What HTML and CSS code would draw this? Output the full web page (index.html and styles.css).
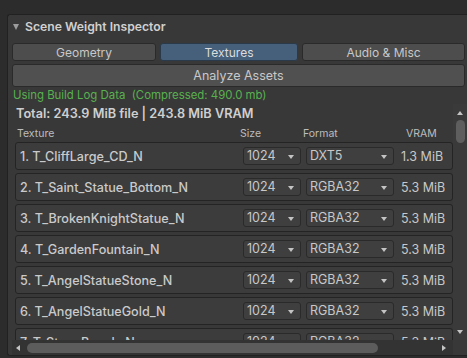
FILE: index.html
```html
<!DOCTYPE html>
<html lang="en">
<head>
  <meta charset="UTF-8">
  <title>Scene Weight Inspector</title>
  <link rel="stylesheet" href="styles.css">
</head>
<body>
  <div class="panel">
    <div class="foldout"><span class="fold-arrow"></span>Scene Weight Inspector</div>

    <div class="tabs">
      <button class="tab">Geometry</button>
      <button class="tab active">Textures</button>
      <button class="tab">Audio &amp; Misc</button>
    </div>

    <button class="analyze">Analyze Assets</button>

    <div class="build-log">Using Build Log Data&nbsp;&nbsp;(Compressed: 490.0 mb)</div>

    <div class="scroll-view">
      <div class="scroll-content">
        <div class="total">Total: 243.9 MiB file | 243.8 MiB VRAM</div>

        <div class="table-head">
          <span>Texture</span>
          <span>Size</span>
          <span>Format</span>
          <span>VRAM</span>
        </div>

        <div class="tex-row">
          <span class="tex-name">1. T_CliffLarge_CD_N</span>
          <div class="popup">1024</div>
          <div class="popup">DXT5</div>
          <span class="vram">1.3 MiB</span>
        </div>
        <div class="tex-row">
          <span class="tex-name">2. T_Saint_Statue_Bottom_N</span>
          <div class="popup">1024</div>
          <div class="popup">RGBA32</div>
          <span class="vram">5.3 MiB</span>
        </div>
        <div class="tex-row">
          <span class="tex-name">3. T_BrokenKnightStatue_N</span>
          <div class="popup">1024</div>
          <div class="popup">RGBA32</div>
          <span class="vram">5.3 MiB</span>
        </div>
        <div class="tex-row">
          <span class="tex-name">4. T_GardenFountain_N</span>
          <div class="popup">1024</div>
          <div class="popup">RGBA32</div>
          <span class="vram">5.3 MiB</span>
        </div>
        <div class="tex-row">
          <span class="tex-name">5. T_AngelStatueStone_N</span>
          <div class="popup">1024</div>
          <div class="popup">RGBA32</div>
          <span class="vram">5.3 MiB</span>
        </div>
        <div class="tex-row">
          <span class="tex-name">6. T_AngelStatueGold_N</span>
          <div class="popup">1024</div>
          <div class="popup">RGBA32</div>
          <span class="vram">5.3 MiB</span>
        </div>
        <div class="tex-row">
          <span class="tex-name">7. T_StoneBench_N</span>
          <div class="popup">1024</div>
          <div class="popup">RGBA32</div>
          <span class="vram">5.3 MiB</span>
        </div>
      </div>

      <div class="vscroll">
        <span class="arrow-up"></span>
        <div class="vthumb"></div>
        <span class="arrow-down"></span>
      </div>

      <div class="hscroll">
        <span class="arrow-left"></span>
        <div class="hthumb"></div>
        <span class="arrow-right"></span>
      </div>

      <div class="corner"></div>
    </div>
  </div>
</body>
</html>
```

FILE: styles.css
```css
body {
  margin: 0;
  height: 358px;
  overflow: hidden;
  background-color: #2c2c2c;
  font-family: Inter, "Noto Sans", sans-serif;
  color: #c4c4c4;
}
.panel {
  margin: 14px 0 0 7px;
  height: 340px;
  padding: 0 2px 0 4px;
  border: 1px solid #212121;
  border-right: none;
  border-radius: 3px 0 0 3px;
  background-color: #383838;
  display: flex;
  flex-direction: column;
}
.foldout {
  height: 24px;
  line-height: 24px;
  font-size: 12.2px;
  font-weight: 600;
  color: #d0d0d0;
  display: flex;
  align-items: center;
}
.fold-arrow {
  width: 0;
  height: 0;
  margin: 0 6px 0 1px;
  border-left: 3.5px solid transparent;
  border-right: 3.5px solid transparent;
  border-top: 6.5px solid #9c9c9c;
}
.tabs {
  margin-top: 4px;
  display: grid;
  grid-template-columns: 144px 138px 1fr;
  column-gap: 4px;
}
.tab, .analyze {
  font-family: inherit;
  color: #c8c8c8;
  background-color: #4d4d4d;
  border: 1px solid #2a2a2a;
  border-radius: 3px;
  padding: 0;
}
.tab {
  height: 18px;
  font-size: 12px;
}
.tab.active {
  background-color: #46607c;
  border-color: #2b3a4b;
  color: #dcdcdc;
}
.analyze {
  margin-top: 3px;
  height: 23px;
  font-size: 12.5px;
  background-color: #505050;
}
.build-log {
  height: 17px;
  line-height: 17px;
  font-size: 11.4px;
  color: #58b14f;
  padding-left: 1px;
}
.scroll-view {
  margin-right: -2px;
  flex: 1;
  display: grid;
  grid-template-columns: 1fr 14px;
  grid-template-rows: 1fr 15px;
  min-height: 0;
}
.scroll-content {
  overflow: hidden;
  padding-left: 3px;
}
.total {
  height: 20px;
  line-height: 20px;
  font-size: 12.7px;
  font-weight: 600;
  color: #cfcfcf;
  padding-left: 1px;
}
.table-head {
  height: 15px;
  padding: 3px 0 0 2px;
  line-height: 14px;
  font-size: 10.5px;
  color: #bdbdbd;
  display: grid;
  grid-template-columns: 223px 63px 103px 1fr;
}
.tex-row {
  height: 26px;
  margin-bottom: 3px;
  border: 1px solid #242424;
  border-radius: 3px;
  background-color: #3c3c3c;
  display: grid;
  grid-template-columns: 227px 58px 93px 1fr;
  align-items: center;
}
.tex-name {
  padding-left: 4px;
  font-size: 12.6px;
  font-weight: 500;
  color: #cacaca;
  white-space: nowrap;
}
.popup {
  position: relative;
  height: 16px;
  line-height: 16px;
  padding-left: 3px;
  font-size: 12.5px;
  color: #c8c8c8;
  background-color: #3f3f3f;
  border: 1px solid #2a2a2a;
  border-radius: 3px;
}
.popup + .popup {
  margin-left: 5px;
}
.popup::after {
  content: "";
  position: absolute;
  right: 6px;
  top: 7px;
  border-left: 3.5px solid transparent;
  border-right: 3.5px solid transparent;
  border-top: 4px solid #c4c4c4;
}
.vram {
  padding-left: 7px;
  font-size: 12.5px;
  color: #c8c8c8;
  white-space: nowrap;
}
.vscroll {
  background-color: #3a3a3a;
  display: flex;
  flex-direction: column;
  align-items: center;
}
.arrow-up, .arrow-down {
  width: 0;
  height: 0;
  border-left: 3.5px solid transparent;
  border-right: 3.5px solid transparent;
}
.arrow-up {
  margin-top: 7px;
  border-bottom: 4px solid #c4c4c4;
}
.arrow-down {
  margin-top: auto;
  margin-bottom: 6px;
  border-top: 4px solid #c4c4c4;
}
.vthumb {
  margin-top: 5px;
  width: 9px;
  height: 23px;
  border-radius: 5px;
  background-color: #5e5e5e;
}
.hscroll {
  background-color: #333333;
  display: flex;
  align-items: center;
  padding: 0 7px 0 4px;
}
.arrow-left, .arrow-right {
  width: 0;
  height: 0;
  border-top: 3.5px solid transparent;
  border-bottom: 3.5px solid transparent;
}
.arrow-left {
  border-right: 4px solid #c4c4c4;
}
.arrow-right {
  margin-left: auto;
  border-left: 4px solid #c4c4c4;
}
.hthumb {
  margin-left: 7px;
  width: 351px;
  height: 10px;
  border-radius: 5px;
  background-color: #5c5c5c;
}
.corner {
  background-color: #383838;
}
```
